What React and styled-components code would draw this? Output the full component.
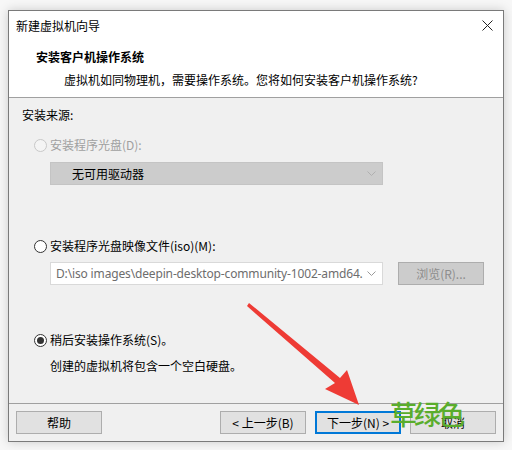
import React from "react";
import styled, { createGlobalStyle } from "styled-components";

const GlobalStyle = createGlobalStyle`
  html, body {
    margin: 0;
    padding: 0;
    background: #f7f7f7;
  }
  body {
    font-family: "Noto Sans CJK SC", "Microsoft YaHei", sans-serif;
    font-size: 12px;
    color: #000;
  }
`;

const Page = styled.div`
  position: relative;
  width: 512px;
  height: 450px;
  padding: 10px 0 0 8px;
  box-sizing: border-box;
`;

const Window = styled.div`
  width: 496px;
  height: 432px;
  box-sizing: border-box;
  border: 1px solid #7a7a7a;
  background: #f0f0f0;
  box-shadow: 0 0 10px rgba(0, 0, 0, 0.18);
  display: flex;
  flex-direction: column;
`;

const Header = styled.div`
  background: #fff;
  height: 86px;
  border-bottom: 1px solid #a0a0a0;
  display: flex;
  flex-direction: column;
`;

const TitleBar = styled.div`
  height: 29px;
  display: flex;
  align-items: center;
  justify-content: space-between;
  padding: 0 10px 0 7px;
`;

const TitleText = styled.span`
  font-size: 12px;
  line-height: 14px;
`;

const Close = styled.svg`
  width: 11px;
  height: 11px;
`;

const PageTitle = styled.div`
  margin: 10px 0 0 27px;
  font-weight: bold;
  font-size: 12px;
  line-height: 14px;
`;

const PageSubtitle = styled.div`
  margin: 9px 0 0 55px;
  font-size: 12px;
  line-height: 14px;
`;

const Body = styled.div`
  flex: 1;
  padding: 10px 0 0 13px;
  display: flex;
  flex-direction: column;
`;

const Label = styled.div`
  line-height: 14px;
  margin-top: ${({ $mt }) => $mt || 0}px;
  margin-left: ${({ $ml }) => $ml || 0}px;
`;

const RadioRow = styled.label`
  display: flex;
  align-items: center;
  gap: 3px;
  margin: ${({ $mt }) => $mt}px 0 0 12px;
  line-height: 14px;
  color: ${({ $disabled }) => ($disabled ? "#a0a0a0" : "#000")};
`;

const RadioDot = styled.span`
  width: 11px;
  height: 11px;
  border-radius: 50%;
  border: 1px solid ${({ $disabled }) => ($disabled ? "#c8c8c8" : "#333")};
  background: ${({ $disabled }) => ($disabled ? "#f4f4f4" : "#fff")};
  display: flex;
  align-items: center;
  justify-content: center;
  &::after {
    content: "";
    width: 7px;
    height: 7px;
    border-radius: 50%;
    background: #333;
    display: ${({ $checked }) => ($checked ? "block" : "none")};
  }
`;

const FieldRow = styled.div`
  display: flex;
  align-items: center;
  gap: 15px;
  margin: ${({ $mt }) => $mt}px 0 0 28px;
`;

const Select = styled.div`
  width: 333px;
  height: 23px;
  box-sizing: border-box;
  display: flex;
  align-items: center;
  justify-content: space-between;
  padding: 0 6px 0 ${({ $pl }) => $pl}px;
  background: ${({ $disabled }) => ($disabled ? "#cccccc" : "#fff")};
  border: 1px solid ${({ $disabled }) => ($disabled ? "#c4c4c4" : "#d9d9d9")};
  color: ${({ $muted }) => ($muted ? "#6d6d6d" : "#000")};
  font-family: ${({ $latin }) =>
    $latin ? '"Noto Sans", "Noto Sans CJK SC", sans-serif' : "inherit"};
  letter-spacing: ${({ $latin }) => ($latin ? "-0.15px" : "0")};
  white-space: nowrap;
  overflow: hidden;
`;

const SelectText = styled.span`
  overflow: hidden;
  white-space: nowrap;
  flex: 1;
`;

const Chevron = styled.svg`
  width: 9px;
  height: 5px;
  flex: none;
  margin-left: 4px;
`;

const Button = styled.button`
  width: 86px;
  height: 23px;
  box-sizing: border-box;
  border: 1px solid ${({ $focus }) => ($focus ? "#0078d7" : "#adadad")};
  box-shadow: ${({ $focus }) => ($focus ? "inset 0 0 0 1px #0078d7" : "none")};
  background: ${({ $disabled }) => ($disabled ? "#cccccc" : "#e1e1e1")};
  color: ${({ $disabled }) => ($disabled ? "#8d8d8d" : "#000")};
  font-family: inherit;
  font-size: 12px;
  padding: 0;
`;

const Footer = styled.div`
  height: 38px;
  border-top: 1px solid #a0a0a0;
  display: flex;
  align-items: flex-start;
  padding: 7px 0 0 7px;
  box-sizing: border-box;
`;

const Spacer = styled.div`
  flex: 1;
`;

const NavButtons = styled.div`
  display: flex;
  gap: 9px;
  margin-right: 7px;
`;

/* green watermark laid over the footer */
const Stamp = styled.div`
  position: absolute;
  left: 390px;
  top: 397px;
  font-size: 27px;
  font-weight: 500;
  line-height: 34px;
  color: #5aad2c;
  letter-spacing: -3px;
`;

const Arrow = styled.svg`
  position: absolute;
  left: 0;
  top: 0;
  pointer-events: none;
`;

export default function App() {
  return (
    <>
      <GlobalStyle />
      <Page>
        <Window>
          <Header>
            <TitleBar>
              <TitleText>新建虚拟机向导</TitleText>
              <Close viewBox="0 0 11 11">
                <path d="M0.5 0.5 L10.5 10.5 M10.5 0.5 L0.5 10.5" stroke="#222" strokeWidth="1" />
              </Close>
            </TitleBar>
            <PageTitle>安装客户机操作系统</PageTitle>
            <PageSubtitle>虚拟机如同物理机，需要操作系统。您将如何安装客户机操作系统?</PageSubtitle>
          </Header>

          <Body>
            <Label>安装来源:</Label>

            <RadioRow $mt={16} $disabled>
              <RadioDot $disabled />
              安装程序光盘(D):
            </RadioRow>
            <FieldRow $mt={10}>
              <Select $disabled $pl={21}>
                <SelectText>无可用驱动器</SelectText>
                <Chevron viewBox="0 0 9 5">
                  <path d="M0.5 0.5 L4.5 4.5 L8.5 0.5" fill="none" stroke="#b0b0b0" />
                </Chevron>
              </Select>
            </FieldRow>

            <RadioRow $mt={54}>
              <RadioDot />
              安装程序光盘映像文件(iso)(M):
            </RadioRow>
            <FieldRow $mt={9}>
              <Select $muted $latin $pl={5}>
                <SelectText>D:\iso images\deepin-desktop-community-1002-amd64.iso</SelectText>
                <Chevron viewBox="0 0 9 5">
                  <path d="M0.5 0.5 L4.5 4.5 L8.5 0.5" fill="none" stroke="#9a9a9a" />
                </Chevron>
              </Select>
              <Button $disabled type="button">浏览(R)...</Button>
            </FieldRow>

            <RadioRow $mt={48}>
              <RadioDot $checked />
              稍后安装操作系统(S)。
            </RadioRow>
            <Label $mt={12} $ml={28}>创建的虚拟机将包含一个空白硬盘。</Label>
          </Body>

          <Footer>
            <Button type="button">帮助</Button>
            <Spacer />
            <NavButtons>
              <Button type="button">&lt; 上一步(B)</Button>
              <Button type="button" $focus>下一步(N) &gt;</Button>
              <Button type="button">取消</Button>
            </NavButtons>
          </Footer>
        </Window>

        <Arrow width="512" height="450" viewBox="0 0 512 450">
          <path
            d="M247 306 L249 303 L340 378 L347 370 L359 405 L325 389 L335 383 Z"
            fill="#ee3b35"
          />
        </Arrow>
        <Stamp>草绿色</Stamp>
      </Page>
    </>
  );
}
